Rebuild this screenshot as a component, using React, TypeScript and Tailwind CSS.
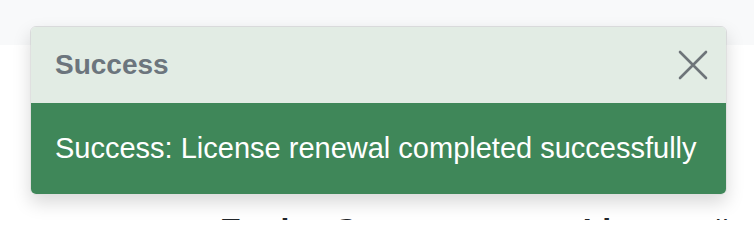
import React from "react";

export default function App() {
  return (
    <div className="relative w-[754px] h-[220px] overflow-hidden bg-white" style={{ fontFamily: '"Liberation Sans", Arial, sans-serif' }}>
      <div className="h-[45px] bg-[#f8f9fa]" />
      <h1 className="mt-[166px] ml-[220px] whitespace-nowrap text-[32px] font-bold leading-[1.2] text-[#212529]">
        Engine Storeroom over License #
      </h1>
      <div className="absolute left-[30px] top-[26px] w-[697px] overflow-hidden rounded-[6px] border border-[rgba(0,0,0,0.12)] shadow-[0_8px_18px_rgba(0,0,0,0.15)]">
        <div className="flex h-[76px] items-center justify-between bg-[#e2ece4] pl-[24px] pr-[18px]">
          <span className="text-[28px] font-bold text-[#6c757d]">Success</span>
          <svg width="30" height="30" viewBox="0 0 30 30" fill="none" className="text-[#6e7479]">
            <path d="M2 2 L28 28 M28 2 L2 28" stroke="currentColor" strokeWidth="2.6" strokeLinecap="round" />
          </svg>
        </div>
        <div className="flex h-[91px] items-center bg-[#3f8759] pl-[24px]">
          <span className="whitespace-nowrap text-[29px] text-white">Success: License renewal completed successfully</span>
        </div>
      </div>
    </div>
  );
}
